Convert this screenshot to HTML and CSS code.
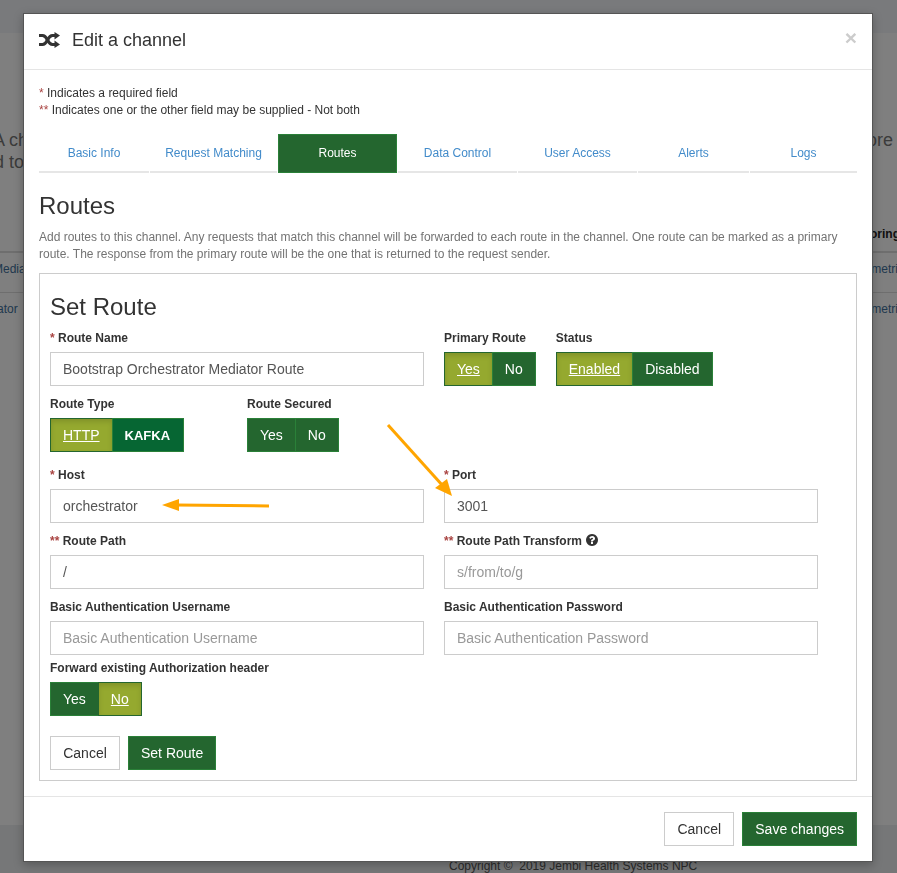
FILE: index.html
```html
<!DOCTYPE html>
<html lang="en">

<head>
  <meta charset="UTF-8">
  <meta name="viewport" content="width=device-width, initial-scale=1.0">
  <title>Edit a channel</title>
  <link rel="stylesheet" href="styles.css">
</head>

<body>
  <!-- page behind the modal, mostly covered -->
  <div class="page">
    <div class="page-top"></div>
    <div class="page-main">
      <div class="lead">
        <div class="lead-left">
          <div>A ch</div>
          <div>d to</div>
        </div>
        <div class="lead-right">ore</div>
      </div>
      <div class="bg-table">
        <div class="bg-row bg-head"><span></span><span class="bg-th">oring</span></div>
        <div class="bg-row"><span>Media</span><span>metri</span></div>
        <div class="bg-row"><span class="bg-cut">ator</span><span>metri</span></div>
      </div>
    </div>
    <div class="page-footer">Copyright &copy;&nbsp; 2019 Jembi Health Systems NPC</div>
  </div>

  <div class="backdrop"></div>

  <div class="modal">
    <div class="modal-header">
      <svg class="title-icon" viewBox="0 0 21 16" width="21" height="16">
        <path class="shuffle-line" d="M0 3.5 H3.5 C6 3.5 7 5 8.5 8 C10 11 11 12.5 13.5 12.5 H17" />
        <path class="shuffle-line" d="M0 12.5 H3.5 C6 12.5 7 11 8.5 8 C10 5 11 3.5 13.5 3.5 H17" />
        <path d="M15.5 0 L21 3.5 L15.5 7.4 Z M15.5 8.6 L21 12.5 L15.5 16 Z" />
      </svg>
      <h4 class="modal-title">Edit a channel</h4>
      <span class="close">&times;</span>
    </div>

    <div class="modal-body">
      <div class="notes">
        <div><span class="req">*</span> Indicates a required field</div>
        <div><span class="req">**</span> Indicates one or the other field may be supplied - Not both</div>
      </div>

      <div class="tabs">
        <a class="tab">Basic Info</a>
        <a class="tab">Request Matching</a>
        <a class="tab active">Routes</a>
        <a class="tab">Data Control</a>
        <a class="tab">User Access</a>
        <a class="tab">Alerts</a>
        <a class="tab">Logs</a>
      </div>

      <h3 class="heading">Routes</h3>
      <p class="help">Add routes to this channel. Any requests that match this channel will be forwarded to each route in the channel. One route can be marked as a primary route. The response from the primary route will be the one that is returned to the request sender.</p>

      <div class="route-box">
        <h3 class="heading">Set Route</h3>

        <div class="form-row">
          <div class="field wide">
            <label><span class="req">*</span> Route Name</label>
            <input type="text" value="Bootstrap Orchestrator Mediator Route">
          </div>
          <div class="field">
            <label>Primary Route</label>
            <div class="toggle"><span class="seg on">Yes</span><span class="seg">No</span></div>
          </div>
          <div class="field">
            <label>Status</label>
            <div class="toggle"><span class="seg on">Enabled</span><span class="seg">Disabled</span></div>
          </div>
        </div>

        <div class="form-row after-toggles">
          <div class="field type-col">
            <label>Route Type</label>
            <div class="toggle"><span class="seg on">HTTP</span><span class="seg kafka">KAFKA</span></div>
          </div>
          <div class="field">
            <label>Route Secured</label>
            <div class="toggle"><span class="seg">Yes</span><span class="seg">No</span></div>
          </div>
        </div>

        <div class="form-row">
          <div class="field wide">
            <label><span class="req">*</span> Host</label>
            <input type="text" value="orchestrator">
          </div>
          <div class="field wide">
            <label><span class="req">*</span> Port</label>
            <input type="text" value="3001">
          </div>
        </div>

        <div class="form-row">
          <div class="field wide">
            <label><span class="req">**</span> Route Path</label>
            <input type="text" value="/">
          </div>
          <div class="field wide">
            <label><span class="req">**</span> Route Path Transform
              <svg class="help-icon" viewBox="0 0 1792 1792" width="14" height="14">
                <path d="M1024 1376v-192q0-14-9-23t-23-9h-192q-14 0-23 9t-9 23v192q0 14 9 23t23 9h192q14 0 23-9t9-23zm256-672q0-88-55.5-163t-138.5-116-170-41q-243 0-371 213-15 24 8 42l132 100q7 6 19 6 16 0 25-12 53-68 86-92 34-24 86-24 48 0 85.5 26t37.5 59q0 38-20 61t-68 45q-63 28-115.5 86.5t-52.5 125.5v36q0 14 9 23t23 9h192q14 0 23-9t9-23q0-19 21.5-49.5t54.5-49.5q32-18 49-28.5t46-35 44.5-48 28-60.5 12.5-81zm384 192q0 209-103 385.5t-279.5 279.5-385.5 103-385.5-103-279.5-279.5-103-385.5 103-385.5 279.5-279.5 385.5-103 385.5 103 279.5 279.5 103 385.5z" />
              </svg>
            </label>
            <input type="text" placeholder="s/from/to/g">
          </div>
        </div>

        <div class="form-row tight">
          <div class="field wide">
            <label>Basic Authentication Username</label>
            <input type="text" placeholder="Basic Authentication Username">
          </div>
          <div class="field wide">
            <label>Basic Authentication Password</label>
            <input type="text" placeholder="Basic Authentication Password">
          </div>
        </div>

        <div class="form-row last">
          <div class="field">
            <label>Forward existing Authorization header</label>
            <div class="toggle"><span class="seg">Yes</span><span class="seg on">No</span></div>
          </div>
        </div>

        <div class="actions">
          <button class="btn cancel">Cancel</button>
          <button class="btn primary">Set Route</button>
        </div>
      </div>
    </div>

    <div class="modal-footer">
      <button class="btn cancel">Cancel</button>
      <button class="btn primary">Save changes</button>
    </div>
  </div>

  <!-- annotation arrows drawn over the screenshot -->
  <svg class="arrows" viewBox="0 0 897 873" width="897" height="873">
    <path class="arrow-line" d="M269 506 L176 505" />
    <path class="arrow-head" d="M162 505 L179 499 L179 511 Z" />
    <path class="arrow-line" d="M388 425 L443 486" />
    <path class="arrow-head" d="M452 496 L435 488 L447 479 Z" />
  </svg>
</body>

</html>
```

FILE: styles.css
```css
* {
  box-sizing: border-box;
}

html,
body {
  height: 100%;
}

body {
  margin: 0;
  font-family: "Liberation Sans", Arial, sans-serif;
  font-size: 14px;
  line-height: 1.42857;
  color: #333;
  overflow: hidden;
}

/* page behind */
.page {
  height: 873px;
  display: flex;
  flex-direction: column;
  overflow: hidden;
  background-color: #fff;
}

.page-top {
  flex: none;
  height: 33px;
  background-color: #f2f4f8;
}

.page-main {
  flex: none;
  height: 792px;
  padding-top: 96px;
}

.lead {
  display: flex;
  justify-content: space-between;
  font-size: 18px;
  line-height: 22px;
  color: #777;
  margin-left: -7px;
  margin-right: 4px;
}

.lead-left div:nth-child(2) {
  margin-left: 1px;
}

.bg-table {
  margin-top: 53px;
  font-size: 12px;
  line-height: 17px;
}

.bg-row {
  display: flex;
  justify-content: space-between;
  height: 39px;
  padding-top: 8px;
  border-top: 1px solid #ddd;
  color: #41719c;
  margin-left: -7px;
  margin-right: -1px;
}

.bg-head {
  height: 27px;
  padding-top: 0;
  border-top: none;
  border-bottom: 2px solid #ddd;
  color: #222;
  font-weight: bold;
  margin-right: -3px;
}

.bg-row:nth-child(2) {
  border-top: none;
}

.bg-cut {
  margin-left: 4px;
}

.page-footer {
  flex: 1;
  min-height: 0;
  padding: 33px 0 0 449px;
  background-color: #eceef0;
  font-size: 12px;
  color: #555;
}

.backdrop {
  position: fixed;
  inset: 0;
  background-color: rgba(0, 0, 0, 0.5);
}

/* modal */
.modal {
  position: absolute;
  left: 23px;
  top: 13px;
  width: 850px;
  background-color: #fff;
  border: 1px solid #555;
  box-shadow: 0 3px 9px rgba(0, 0, 0, 0.25);
}

.modal-header {
  display: flex;
  align-items: center;
  height: 56px;
  padding: 0 15px;
  border-bottom: 1px solid #e5e5e5;
}

.title-icon {
  fill: #333;
  margin-right: 12px;
  margin-top: -4px;
}

.shuffle-line {
  fill: none;
  stroke: #333;
  stroke-width: 3;
}

.modal-title {
  flex: 1;
  margin: -1px 0 0;
  font-size: 18px;
  font-weight: normal;
}

.close {
  font-size: 21px;
  font-weight: bold;
  line-height: 1;
  color: #ccc;
  margin-top: -8px;
}

.modal-body {
  padding: 15px;
}

.notes {
  font-size: 12px;
  line-height: 17px;
  margin-bottom: 15px;
}

.req {
  color: #a94442;
}

.tabs {
  display: grid;
  grid-template-columns: 110px 127px 119px 119px 119px 111px 107px;
  column-gap: 1px;
}

.tab {
  height: 39px;
  line-height: 38px;
  text-align: center;
  font-size: 12px;
  color: #428bca;
  border-bottom: 2px solid #e6e6e6;
}

.tab.active {
  line-height: 36px;
  color: #fff;
  background-color: #24662f;
  border: 1px solid #2a8038;
}

.heading {
  margin: 20px 0 10px;
  font-size: 24px;
  font-weight: normal;
  line-height: 26px;
}

.help {
  margin: 0 0 10px;
  font-size: 12px;
  line-height: 17px;
  color: #737373;
}

.route-box {
  padding: 0 10px 10px;
  border: 1px solid #ccc;
}

/* form */
.form-row {
  display: flex;
  gap: 20px;
  margin-bottom: 10px;
}

.form-row.after-toggles {
  margin-bottom: 15px;
  gap: 0;
}

.form-row.tight {
  margin-bottom: 5px;
}

.form-row.last {
  margin-bottom: 20px;
}

.field.wide {
  width: 374px;
}

.type-col {
  width: 197px;
}

label {
  display: block;
  margin-bottom: 5px;
  font-size: 12px;
  line-height: 17px;
  font-weight: bold;
}

.help-icon {
  fill: #333;
  vertical-align: -2px;
}

input[type="text"] {
  display: block;
  width: 100%;
  height: 34px;
  padding: 6px 12px;
  font-family: inherit;
  font-size: 14px;
  color: #555;
  background-color: #fff;
  border: 1px solid #ccc;
  border-radius: 0;
  outline: none;
}

input::placeholder {
  color: #999;
  opacity: 1;
}

.toggle {
  display: flex;
}

.seg {
  height: 34px;
  padding: 7px 12px 5px;
  color: #fff;
  background-color: #24662f;
  border: 1px solid #2a8038;
  margin-right: -1px;
}

.seg:last-child {
  margin-right: 0;
}

.seg.on {
  background-color: #95a92f;
  border-color: #24662f;
  text-decoration: underline;
  box-shadow: inset 0 3px 5px rgba(0, 0, 0, 0.125);
}

.seg.kafka {
  padding-right: 13px;
  font-weight: bold;
  font-size: 13px;
  line-height: 20px;
  background-color: #066633;
}

.actions {
  display: flex;
  gap: 8px;
}

.btn {
  height: 34px;
  padding: 6px 12px;
  font-family: inherit;
  font-size: 14px;
  line-height: 20px;
  color: #333;
  background-color: #fff;
  border: 1px solid #ccc;
  border-radius: 0;
}

.btn.cancel {
  width: 70px;
}

.btn.primary {
  color: #fff;
  background-color: #24662f;
  border-color: #2a8038;
}

.modal-footer {
  display: flex;
  justify-content: flex-end;
  gap: 8px;
  padding: 15px;
  border-top: 1px solid #e5e5e5;
}

/* annotation */
.arrows {
  position: absolute;
  left: 0;
  top: 0;
  pointer-events: none;
}

.arrow-line {
  fill: none;
  stroke: #ffa500;
  stroke-width: 3;
}

.arrow-head {
  fill: #ffa500;
}
```
